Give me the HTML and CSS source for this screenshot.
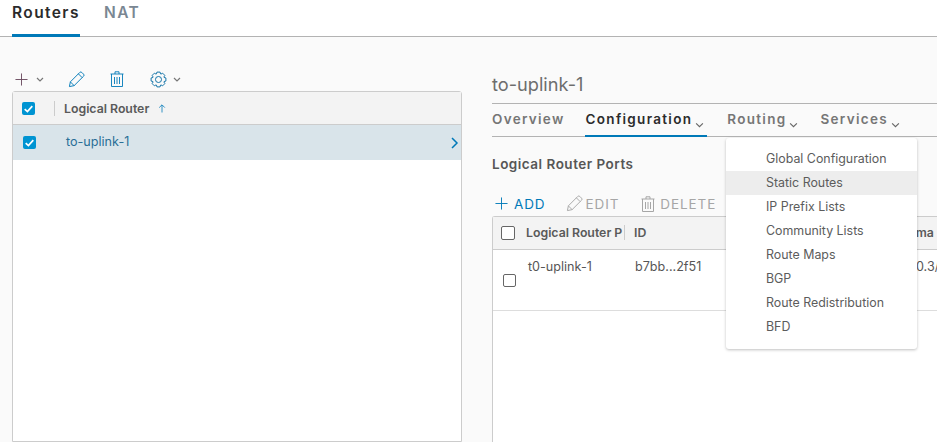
FILE: index.html
```html
<!DOCTYPE html>
<html lang="en">
<head>
<meta charset="utf-8">
<title>Routers</title>
<link rel="stylesheet" href="styles.css">
</head>
<body>
<nav class="top-tabs">
  <a class="top-tab active">Routers</a>
  <a class="top-tab">NAT</a>
</nav>
<main class="content">
  <section class="left">
    <div class="toolbar">
      <svg class="ico plus" viewBox="0 0 14 14"><path d="M7 .5v13M.5 7h13"/></svg>
      <svg class="caret" viewBox="0 0 8 5"><path d="M1 1l3 3 3-3"/></svg>
      <svg class="ico pencil" viewBox="0 0 18 18"><path d="M1.500 16.500l1-5L12.500 1.500a1.500 1.500 0 0 1 2.100 0l1.900 1.900a1.500 1.500 0 0 1 0 2.100L6.500 15.500zM2.500 11.500l4 4M11 3l4 4"/></svg>
      <svg class="ico trash" viewBox="0 0 14 16"><path d="M.5 3h13M1.500 3v12.500h11V3M5 3V.8h4V3M4.500 6v7M7 6v7M9.500 6v7"/></svg>
      <svg class="ico gear" viewBox="0 0 18 18"><polygon points="14.92,6.85 16.83,7.34 16.83,10.66 14.92,11.15 14.71,11.66 15.71,13.36 13.36,15.71 11.66,14.71 11.15,14.92 10.66,16.83 7.34,16.83 6.85,14.92 6.34,14.71 4.64,15.71 2.29,13.36 3.29,11.66 3.08,11.15 1.17,10.66 1.17,7.34 3.08,6.85 3.29,6.34 2.29,4.64 4.64,2.29 6.34,3.29 6.85,3.08 7.34,1.17 10.66,1.17 11.15,3.08 11.66,3.29 13.36,2.29 15.71,4.64 14.71,6.34"/><circle cx="9" cy="9" r="3.200"/></svg>
      <svg class="caret" viewBox="0 0 8 5"><path d="M1 1l3 3 3-3"/></svg>
    </div>
    <div class="grid">
      <div class="grid-head">
        <span class="check on"><svg viewBox="0 0 12 12"><path d="M2.500 6.500l2.500 2.300 4.500-5"/></svg></span>
        <span class="sep"></span>
        <span class="grid-title">Logical Router</span>
        <svg class="sort" viewBox="0 0 8 9"><path d="M4 8.500V1M1.200 3.600L4 .8l2.800 2.800"/></svg>
      </div>
      <div class="grid-row">
        <span class="check on"><svg viewBox="0 0 12 12"><path d="M2.500 6.500l2.500 2.300 4.500-5"/></svg></span>
        <a class="router-link">to-uplink-1</a>
        <svg class="chev" viewBox="0 0 8 12"><path d="M1.500 1l5 5-5 5"/></svg>
      </div>
    </div>
  </section>
  <section class="right">
    <h1 class="title">to-uplink-1</h1>
    <div class="sub-tabs">
      <a class="sub-tab">Overview</a>
      <a class="sub-tab active">Configuration<svg class="tab-caret" viewBox="0 0 8 5"><path d="M1 1l3 3 3-3"/></svg></a>
      <a class="sub-tab">Routing<svg class="tab-caret" viewBox="0 0 8 5"><path d="M1 1l3 3 3-3"/></svg></a>
      <a class="sub-tab">Services<svg class="tab-caret" viewBox="0 0 8 5"><path d="M1 1l3 3 3-3"/></svg></a>
    </div>
    <h2 class="section-title">Logical Router Ports</h2>
    <div class="actions">
      <span class="action add"><svg class="ico-a" viewBox="0 0 14 14"><path d="M7 .5v13M.5 7h13"/></svg>ADD</span>
      <span class="action off"><svg class="ico-a pen" viewBox="0 0 18 18"><path d="M1.500 16.500l1-5L12.500 1.500a1.500 1.500 0 0 1 2.100 0l1.900 1.900a1.500 1.500 0 0 1 0 2.100L6.500 15.500zM2.500 11.500l4 4M11 3l4 4"/></svg>EDIT</span>
      <span class="action off"><svg class="ico-a bin" viewBox="0 0 14 16"><path d="M.5 3h13M1.500 3v12.500h11V3M5 3V.8h4V3M4.500 6v7M7 6v7M9.500 6v7"/></svg>DELETE</span>
    </div>
    <div class="ports">
      <div class="ports-head">
        <span class="check"></span>
        <span class="col-name">Logical Router P</span>
        <span class="col-id">ID</span>
        <span class="col-ip">/ma</span>
      </div>
      <div class="ports-row">
        <span class="check small"></span>
        <span class="cell-name">t0-uplink-1</span>
        <span class="cell-id">b7bb...2f51</span>
        <span class="cell-ip">0.3/</span>
      </div>
    </div>
  </section>
</main>
<ul class="menu">
  <li>Global Configuration</li>
  <li class="hover">Static Routes</li>
  <li>IP Prefix Lists</li>
  <li>Community Lists</li>
  <li>Route Maps</li>
  <li>BGP</li>
  <li>Route Redistribution</li>
  <li>BFD</li>
</ul>
</body>
</html>
```
FILE: styles.css
```css
* { box-sizing: border-box; }
html, body { height: 100%; }
body {
  margin: 0;
  overflow: hidden;
  background: #fafafa;
  font-family: Inter, "Liberation Sans", sans-serif;
  color: #565656;
  position: relative;
}
svg { fill: none; stroke: currentColor; display: block; flex: none; }

.top-tabs {
  height: 37px;
  background: #fff;
  border-bottom: 1px solid #b3b3b3;
  display: flex;
  gap: 24px;
  padding-left: 12px;
}
.top-tab {
  height: 37px;
  font-size: 15.500px;
  font-weight: 600;
  letter-spacing: 1.400px;
  line-height: 25px;
  color: #7a8793;
}
.top-tab.active { color: #2b2b2b; border-bottom: 3px solid #0079b8; width: 68px; }

.content { display: flex; padding-left: 12px; gap: 30px; height: 405px; }

.left { width: 450px; flex: none; padding-top: 32px; display: flex; flex-direction: column; }
.toolbar { height: 22px; padding-bottom: 2px; display: flex; align-items: center; padding-left: 3px; color: #0079b8; }
.ico { stroke-width: 1; }
.plus { width: 13px; height: 13px; color: #6a4a5e; }
.toolbar .caret { width: 8px; height: 5px; color: #777; stroke-width: 1.200; margin-left: 8px; }
.pencil { width: 17px; height: 17px; margin-left: 24px; }
.trash { width: 14px; height: 16px; margin-left: 25px; color: #0079b8; stroke-width: .9; }
.gear { width: 17px; height: 17px; margin-left: 26px; color: #0b6fa5; }
.toolbar .gear + .caret { margin-left: 6px; }

.grid { flex: 1; background: #fff; border: 1px solid #ccc; border-radius: 3px 3px 0 0; }
.grid-head {
  height: 33px;
  background: #f3f3f3;
  border-bottom: 1px solid #ccc;
  display: flex;
  align-items: center;
  padding-left: 9px;
}
.check {
  width: 13px; height: 13px;
  border: 1.500px solid #666;
  border-radius: 2px;
  background: #fff;
  flex: none;
  display: block;
}
.check.on { background: #0094d2; border: 0; }
.check.on svg { width: 13px; height: 13px; stroke: #fff; stroke-width: 1.600; }
.sep { width: 1px; height: 15px; background: #ccc; margin-left: 19px; }
.grid-title { font-size: 12.300px; font-weight: 600; color: #5a5a5a; margin-left: 9px; }
.sort { width: 8px; height: 9px; margin-left: 9px; color: #0079b8; stroke-width: .8; }
.grid-row {
  height: 35px;
  background: #d9e4ea;
  display: flex;
  align-items: center;
  padding: 0 2px 0 10px;
}
.router-link { font-size: 12.600px; color: #2a6f97; margin-left: 30px; flex: 1; line-height: 33px; height: 35px; }
.chev { width: 9px; height: 12px; color: #0079b8; stroke-width: 1.500; }

.right { flex: 1; min-width: 0; padding-top: 35px; }
.title { margin: 0; font-size: 18.200px; font-weight: 400; color: #6d6d6d; height: 31px; line-height: 24px; }
.sub-tabs {
  height: 34px;
  border-top: 1px solid #b3b3b3;
  border-bottom: 1px solid #b3b3b3;
  display: flex;
  gap: 20px;
}
.sub-tab {
  display: flex;
  font-size: 13.500px;
  font-weight: 600;
  letter-spacing: 1.300px;
  line-height: 31px;
  color: #767676;
  height: 33px;
}
.sub-tab.active { color: #2b2b2b; border-bottom: 2px solid #0079b8; padding: 0 1px; }
.tab-caret { width: 9px; height: 6px; margin: 18px 2px 0 3px; stroke-width: 1; color: #666; }
.section-title { margin: 0; font-size: 13.500px; letter-spacing: .5px; font-weight: 600; color: #565656; height: 54px; padding-top: 19px; line-height: 17px; }
.actions { height: 25px; display: flex; align-items: center; gap: 20px; padding-left: 3px; font-size: 13.500px; letter-spacing: .9px; }
.action { display: flex; align-items: center; }
.action.add { color: #0079b8; }
.action.off { color: #a6a6a6; }
.action.off + .action.off { margin-left: 2px; }
.ico-a { width: 13px; height: 13px; margin-right: 6px; stroke-width: 1; }
.ico-a.pen { width: 17px; height: 17px; margin-right: 3px; }
.ico-a.bin { width: 14px; height: 16px; margin-right: 5px; }

.ports { height: 240px; width: 470px; background: #fff; border: 1px solid #ccc; border-right: 0; border-radius: 3px 0 0 0; }
.ports-head {
  height: 33px;
  background: #f3f3f3;
  border-bottom: 1px solid #ccc;
  display: flex;
  align-items: center;
  padding: 0 0 1px 8px;
  font-size: 12.300px;
  font-weight: 600;
  color: #5a5a5a;
}
.ports-head .check { width: 14px; height: 14px; margin-top: 1px; }
.col-name { width: 99px; margin-left: 11px; white-space: nowrap; border-right: 1px solid #ccc; overflow: hidden; height: 15px; line-height: 15px; flex: none; }
.col-id { margin-left: 9px; width: 277px; flex: none; }
.ports-row {
  height: 61px;
  border-bottom: 1px solid #ddd;
  position: relative;
  font-size: 12.600px;
  display: flex;
  padding: 9px 0 0 10px;
  line-height: 16px;
  color: #565656;
}
.check.small { width: 13px; height: 13px; border-width: 1px; margin-top: 15px; }
.cell-name { margin-left: 12px; width: 107px; flex: none; }
.cell-id { width: 281px; flex: none; }
.cell-ip { flex: none; }

.menu {
  position: absolute;
  left: 726px;
  top: 138px;
  width: 191px;
  height: 211px;
  margin: 0;
  padding: 9px 0 0;
  list-style: none;
  background: #fff;
  border-radius: 3px;
  box-shadow: 0 1px 3px rgba(0,0,0,.25);
  font-size: 12.400px;
  color: #5c5c5c;
}
.menu li { height: 24px; line-height: 24px; padding-left: 40px; white-space: nowrap; }
.menu li.hover { background: #ededed; }
```
